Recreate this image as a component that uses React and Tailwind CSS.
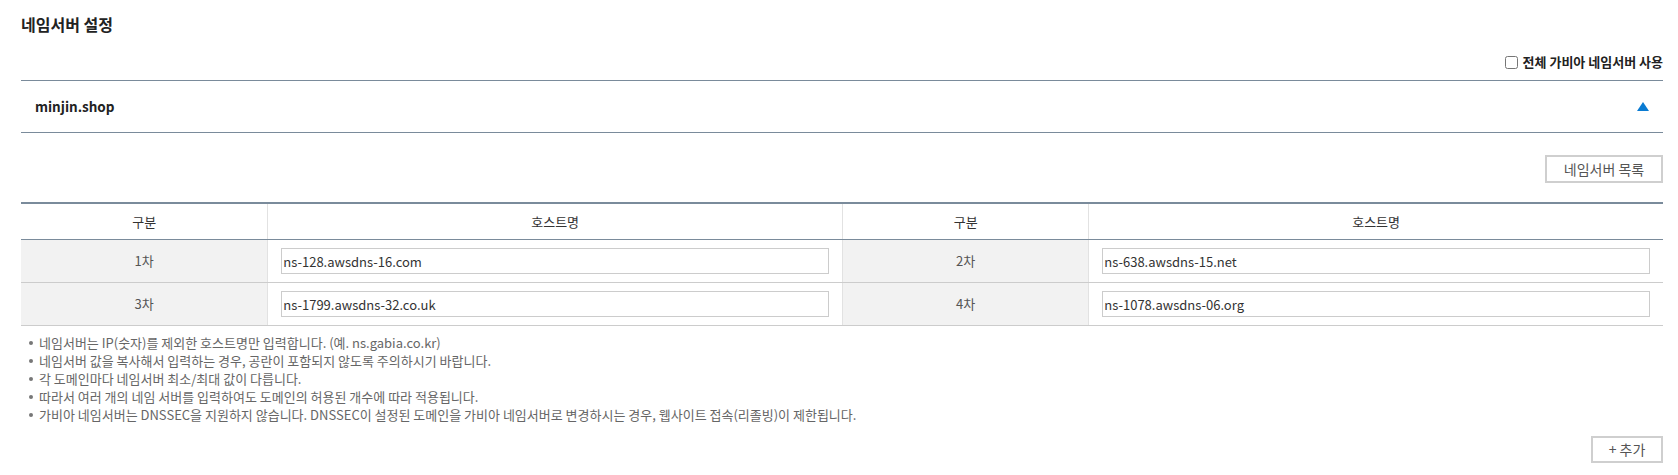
import React from 'react';

const rows = [
  [{ label: '1차', host: 'ns-128.awsdns-16.com' }, { label: '2차', host: 'ns-638.awsdns-15.net' }],
  [{ label: '3차', host: 'ns-1799.awsdns-32.co.uk' }, { label: '4차', host: 'ns-1078.awsdns-06.org' }],
];

const notes = [
  '네임서버는 IP(숫자)를 제외한 호스트명만 입력합니다. (예. ns.gabia.co.kr)',
  '네임서버 값을 복사해서 입력하는 경우, 공란이 포함되지 않도록 주의하시기 바랍니다.',
  '각 도메인마다 네임서버 최소/최대 값이 다릅니다.',
  '따라서 여러 개의 네임 서버를 입력하여도 도메인의 허용된 개수에 따라 적용됩니다.',
  '가비아 네임서버는 DNSSEC을 지원하지 않습니다. DNSSEC이 설정된 도메인을 가비아 네임서버로 변경하시는 경우, 웹사이트 접속(리졸빙)이 제한됩니다.',
];

const HeadCell = ({ children, first }) => (
  <div
    className={`h-[35px] flex items-center justify-center text-[13px] text-[#333] ${first ? '' : 'border-l border-[#e2e2e2]'}`}
  >
    {children}
  </div>
);

const LabelCell = ({ children, first }) => (
  <div
    className={`h-[42px] flex items-center justify-center bg-[#f2f2f2] text-[13px] text-[#555] ${first ? '' : 'border-l border-[#e2e2e2]'}`}
  >
    {children}
  </div>
);

const InputCell = ({ value }) => (
  <div className="h-[42px] flex items-center pl-[13px] pr-[13px] border-l border-[#e2e2e2]">
    <input
      type="text"
      defaultValue={value}
      className="w-full h-[26px] border border-[#cccccc] bg-white px-[1px] text-[13px] text-[#333] outline-none font-['Noto_Sans_CJK_KR',sans-serif]"
    />
  </div>
);

export default function App() {
  return (
    <div className="w-[1678px] h-[475px] overflow-hidden bg-white pl-[21px] pr-[15px] font-['Noto_Sans_CJK_KR','Noto_Sans',sans-serif] text-[#333]">
      <h2 className="pt-[13px] h-[48px] text-[16px] font-semibold leading-[22px] text-[#222]">네임서버 설정</h2>

      <div className="flex justify-end items-center h-[32px] pb-[4px]">
        <label className="flex items-center gap-[5px] text-[13px] font-semibold text-[#222]">
          <input type="checkbox" className="w-[13px] h-[13px] m-0" />
          전체 가비아 네임서버 사용
        </label>
      </div>

      <div className="border-t border-b border-[#7a8b9b] h-[53px] flex items-center justify-between pl-[14px] pr-[14px]">
        <span className="text-[13.5px] font-semibold text-[#222]">minjin.shop</span>
        <svg width="12" height="9" viewBox="0 0 12 9">
          <polygon points="6,0 12,9 0,9" fill="#0a7bd2" />
        </svg>
      </div>

      <div className="flex justify-end pt-[22px]">
        <button className="h-[28px] w-[118px] border-2 border-[#cfcfcf] bg-white text-[14px] text-[#555]">
          네임서버 목록
        </button>
      </div>

      <div className="mt-[19px] border-t-2 border-[#7a8b9b]">
        <div className="grid grid-cols-[15%_35%_15%_35%] border-b border-[#7a8b9b]">
          <HeadCell first>구분</HeadCell>
          <HeadCell>호스트명</HeadCell>
          <HeadCell>구분</HeadCell>
          <HeadCell>호스트명</HeadCell>
        </div>
        {rows.map((row, i) => (
          <div key={i} className="grid grid-cols-[15%_35%_15%_35%] border-b border-[#cccccc]">
            <LabelCell first>{row[0].label}</LabelCell>
            <InputCell value={row[0].host} />
            <LabelCell>{row[1].label}</LabelCell>
            <InputCell value={row[1].host} />
          </div>
        ))}
      </div>

      <ul className="mt-[8px] pl-[8px]">
        {notes.map((n) => (
          <li key={n} className="flex items-center h-[18px] text-[13px] text-[#666]">
            <span className="w-[4px] h-[4px] rounded-full bg-[#777] mr-[6px] shrink-0" />
            {n}
          </li>
        ))}
      </ul>

      <div className="flex justify-end pt-[12px]">
        <button className="h-[27px] w-[72px] border-2 border-[#cfcfcf] bg-white text-[14px] text-[#555]">
          + 추가
        </button>
      </div>
    </div>
  );
}
